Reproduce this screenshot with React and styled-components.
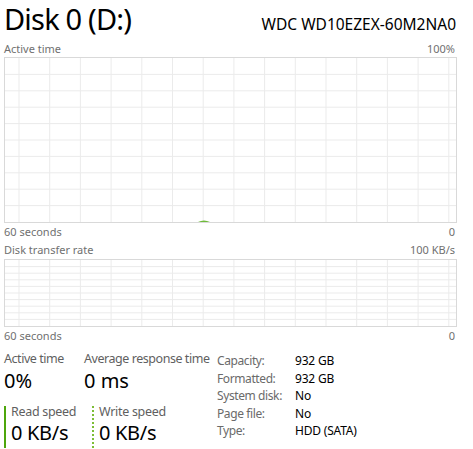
import styled, { createGlobalStyle } from "styled-components";

const GlobalStyle = createGlobalStyle`
  html, body {
    margin: 0;
    padding: 0;
    background: #fff;
  }
  body {
    font-family: "Noto Sans", "Open Sans", sans-serif;
    color: #000;
  }
`;

const Page = styled.div`
  width: 453px;
  padding-left: 4px;
  display: flex;
  flex-direction: column;
`;

const Header = styled.div`
  display: flex;
  justify-content: space-between;
  align-items: baseline;
  height: 40px;
  padding-top: 1px;
  box-sizing: border-box;
`;

const Title = styled.div`
  font-size: 29px;
  line-height: 36px;
  letter-spacing: -0.8px;
`;

const Model = styled.div`
  font-size: 15.5px;
  line-height: 20px;
  margin-right: 1px;
`;

const AxisRow = styled.div`
  display: flex;
  justify-content: space-between;
  font-size: 11px;
  color: #707070;
  height: ${(p) => p.$h || 17}px;
  line-height: ${(p) => p.$h || 17}px;
  padding-right: 2px;
`;

const GraphBox = styled.div`
  border: 1px solid #d9d9d9;
  height: ${(p) => p.$h}px;
`;

const GridSvg = styled.svg`
  display: block;
  width: 100%;
  height: 100%;
`;

const Stats = styled.div`
  display: flex;
  padding-top: 6px;
`;

const LeftStats = styled.div`
  width: 213px;
  display: flex;
  flex-direction: column;
`;

const StatRow = styled.div`
  display: flex;
`;

const StatBlock = styled.div`
  width: ${(p) => p.$w}px;
  display: flex;
  flex-direction: column;
`;

const StatLabel = styled.div`
  font-size: 12.5px;
  line-height: 18px;
  letter-spacing: -0.45px;
  color: #5f5f5f;
  white-space: nowrap;
`;

const StatValue = styled.div`
  font-size: 20px;
  line-height: 26px;
`;

const SpeedRow = styled.div`
  display: flex;
  margin-top: 12px;
`;

const SpeedBlock = styled.div`
  width: ${(p) => p.$w}px;
  padding-left: 7px;
  padding-bottom: 2px;
  box-sizing: border-box;
  background-repeat: no-repeat;
  background-size: 2px 100%;
  background-position: left top;
  background-image: ${(p) =>
    p.$dotted
      ? "repeating-linear-gradient(to bottom, #7dbd36 0 2px, transparent 2px 4px)"
      : "linear-gradient(#4da60c, #4da60c)"};
`;

const SpeedLabel = styled.div`
  font-size: 12.5px;
  line-height: 12px;
  letter-spacing: -0.3px;
  color: #5f5f5f;
`;

const SpeedValue = styled.div`
  font-size: 20px;
  line-height: 26px;
  margin-top: 2px;
  letter-spacing: -0.3px;
`;

const Info = styled.div`
  display: grid;
  grid-template-columns: 78px auto;
  align-content: start;
  font-size: 12px;
  line-height: 17.5px;
  margin-top: 2px;
`;

const InfoLabel = styled.div`
  color: #6a6a6a;
  letter-spacing: -0.4px;
`;

const InfoValue = styled.div`
  color: #000;
  letter-spacing: -0.2px;
`;

function Grid({ width, height, rows, blip }) {
  const vLines = [];
  for (let i = 0; i < 15; i++) vLines.push(14 + i * 30.7);
  const hLines = [];
  for (let i = 1; i < rows; i++) hLines.push((height / rows) * i);
  return (
    <GridSvg viewBox={`0 0 ${width} ${height}`} preserveAspectRatio="none">
      {vLines.map((x) => (
        <line key={"v" + x} x1={x} x2={x} y1={0} y2={height} stroke="#ebebeb" strokeWidth="1" />
      ))}
      {hLines.map((y) => (
        <line key={"h" + y} x1={0} x2={width} y1={y} y2={y} stroke="#ebebeb" strokeWidth="1" />
      ))}
      {blip && <path d={`M193 ${height} Q199 ${height - 3.2} 205 ${height} Z`} fill="#6fbb3a" />}
    </GridSvg>
  );
}

const info = [
  ["Capacity:", "932 GB"],
  ["Formatted:", "932 GB"],
  ["System disk:", "No"],
  ["Page file:", "No"],
  ["Type:", "HDD (SATA)"],
];

export default function App() {
  return (
    <>
      <GlobalStyle />
      <Page>
        <Header>
          <Title>Disk 0 (D:)</Title>
          <Model>WDC WD10EZEX-60M2NA0</Model>
        </Header>
        <AxisRow>
          <span>Active time</span>
          <span>100%</span>
        </AxisRow>
        <GraphBox $h={164}>
          <Grid width={451} height={164} rows={10} blip />
        </GraphBox>
        <AxisRow>
          <span>60 seconds</span>
          <span>0</span>
        </AxisRow>
        <AxisRow $h={19}>
          <span>Disk transfer rate</span>
          <span>100 KB/s</span>
        </AxisRow>
        <GraphBox $h={66}>
          <Grid width={451} height={66} rows={10} />
        </GraphBox>
        <AxisRow>
          <span>60 seconds</span>
          <span>0</span>
        </AxisRow>
        <Stats>
          <LeftStats>
            <StatRow>
              <StatBlock $w={80}>
                <StatLabel>Active time</StatLabel>
                <StatValue>0%</StatValue>
              </StatBlock>
              <StatBlock $w={130}>
                <StatLabel>Average response time</StatLabel>
                <StatValue>0 ms</StatValue>
              </StatBlock>
            </StatRow>
            <SpeedRow>
              <SpeedBlock $w={88}>
                <SpeedLabel>Read speed</SpeedLabel>
                <SpeedValue>0 KB/s</SpeedValue>
              </SpeedBlock>
              <SpeedBlock $w={100} $dotted>
                <SpeedLabel>Write speed</SpeedLabel>
                <SpeedValue>0 KB/s</SpeedValue>
              </SpeedBlock>
            </SpeedRow>
          </LeftStats>
          <Info>
            {info.map(([k, v]) => [
              <InfoLabel key={k}>{k}</InfoLabel>,
              <InfoValue key={k + "v"}>{v}</InfoValue>,
            ])}
          </Info>
        </Stats>
      </Page>
    </>
  );
}
